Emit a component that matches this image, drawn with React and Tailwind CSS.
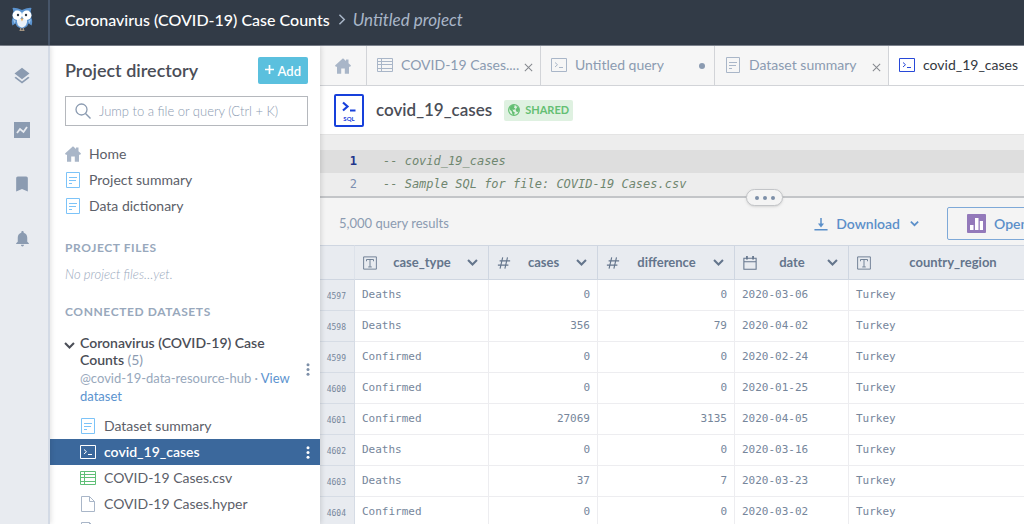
import { MdBookmark, MdLayers, MdNotifications } from 'react-icons/md';

const COLUMNS = [
  { key: 'case_type', icon: TextTypeIcon, width: 'w-[134px]' },
  { key: 'cases', icon: NumberTypeIcon, width: 'w-[109px]', numeric: true },
  { key: 'difference', icon: NumberTypeIcon, width: 'w-[137px]', numeric: true },
  { key: 'date', icon: DateTypeIcon, width: 'w-[114px]' },
  { key: 'country_region', icon: TextTypeIcon, width: '' },
];

const ROWS = [
  [4597, 'Deaths', 0, 0, '2020-03-06', 'Turkey'],
  [4598, 'Deaths', 356, 79, '2020-04-02', 'Turkey'],
  [4599, 'Confirmed', 0, 0, '2020-02-24', 'Turkey'],
  [4600, 'Confirmed', 0, 0, '2020-01-25', 'Turkey'],
  [4601, 'Confirmed', 27069, 3135, '2020-04-05', 'Turkey'],
  [4602, 'Deaths', 0, 0, '2020-03-16', 'Turkey'],
  [4603, 'Deaths', 37, 7, '2020-03-23', 'Turkey'],
  [4604, 'Confirmed', 0, 0, '2020-03-02', 'Turkey'],
];

function Svg({ size = 16, className = '', children }) {
  return (
    <svg width={size} height={size} viewBox="0 0 16 16" fill="none" stroke="currentColor" aria-hidden="true"
      className={`shrink-0 ${className}`}>
      {children}
    </svg>
  );
}

function HomeIcon({ className }) {
  return (
    <Svg className={className}>
      <path fill="currentColor" stroke="none" d="M8 .3 11 3V1.500h2.500V5.200L16 7.600 15.200 8.800H14V15.700H9.800V10.500H6.200V15.700H2V8.800H.8L0 7.600Z" />
    </Svg>
  );
}

function SummaryIcon({ className }) {
  return (
    <Svg className={className}>
      <path d="M1.500.5h13v15h-13zM4 5.500h8M4 8.500h7M4 11.500h3" />
    </Svg>
  );
}

function QueryIcon({ className }) {
  return (
    <Svg className={className}>
      <path d="M.5 1.500h15v13H.5zM4 5.500l2.500 2.200L4 10M8 10.500h4" />
    </Svg>
  );
}

function TableIcon({ className }) {
  return (
    <Svg className={className}>
      <path d="M.5 1.500h15v13H.5zM.5 4.500h15M.5 7.500h15M.5 11.500h15M4.500 1.500v13" />
    </Svg>
  );
}

function FileIcon({ className }) {
  return (
    <Svg className={className}>
      <path d="M1.500.5h8l5 5v10h-13zM9.500.5v5h5" />
    </Svg>
  );
}

function ChartIcon() {
  return (
    <Svg>
      <path fill="currentColor" stroke="none" d="M0 0h16v16H0z" />
      <path stroke="#e8ebf0" strokeWidth="1.800" d="M3 11 6 7l3.500 3L13 5" />
    </Svg>
  );
}

function TextTypeIcon() {
  return (
    <Svg size={14}>
      <path d="M.7 1h14.600v14H.7zM4 6V4h8v2M8 4v8.300M6 12.500h4" />
    </Svg>
  );
}

function NumberTypeIcon() {
  return (
    <Svg size={14}>
      <path strokeWidth="1.300" d="M6.500 1.500 3.500 14.500M12 1.500 9 14.500M3 5.500h12M1 10.500h12" />
    </Svg>
  );
}

function DateTypeIcon() {
  return (
    <Svg size={14}>
      <path strokeWidth="1.200" d="M1 2.500h14v12.700H1zM1 6.500h14" />
      <path strokeWidth="2" d="M4.500 0v4M11.500 0v4" />
    </Svg>
  );
}

function Chevron({ size = 11, className }) {
  return (
    <Svg size={size} className={className}>
      <path strokeWidth="3" d="M1.500 4.500 8 11l6.500-6.500" />
    </Svg>
  );
}

function CloseIcon() {
  return (
    <Svg size={9}>
      <path strokeWidth="1.800" d="M1.500 1.500l13 13M14.500 1.500l-13 13" />
    </Svg>
  );
}

function Kebab() {
  return (
    <svg width="4" height="13" viewBox="0 0 4 13" fill="currentColor" aria-hidden="true">
      <circle cx="2" cy="1.700" r="1.500" />
      <circle cx="2" cy="6.500" r="1.500" />
      <circle cx="2" cy="11.300" r="1.500" />
    </svg>
  );
}

function Owl() {
  return (
    <svg width="22" height="24" viewBox="0 0 22 24" aria-hidden="true">
      <path fill="#5b93cf" d="M1.500 1Q4 .2 11 3 18 .2 20.500 1L19.600 4.500Q21.200 7 20.300 11 22 14 20.600 18.500L17.500 16.500Q16 21 11 21.500 6 21 4.500 16.500L1.400 18.500Q0 14 1.700 11 .8 7 2.400 4.500Z" />
      <path fill="#9cc5ea" d="M4 3.500Q8 3 11 5.500 14 3 18 3.500L11 9ZM1.800 12 4.800 14 3.500 16.500ZM20.200 12 17.200 14 18.500 16.500Z" />
      <path fill="#e9f1f8" d="M6 12h10q1 7-5 8.800Q5 19 6 12Z" />
      <circle cx="6.300" cy="8.300" r="4.700" fill="#fff" />
      <circle cx="15.700" cy="8.300" r="4.700" fill="#fff" />
      <circle cx="7" cy="8" r="1.200" fill="#2f3a48" />
      <circle cx="15" cy="8" r="1.200" fill="#2f3a48" />
      <path fill="#eda64a" d="M9.700 11.500h2.600L11 14.500Z" />
      <path stroke="#b9a58c" fill="none" d="M9.700 21v2.500M12.300 21v2.500M8.500 23.300h5" />
    </svg>
  );
}

function Rail() {
  const items = [
    ['Layers', <MdLayers size={20} />],
    ['Insights', <ChartIcon />],
    ['Bookmarks', <MdBookmark size={20} />],
    ['Notifications', <MdNotifications size={19} />],
  ];
  return (
    <nav aria-label="Main" className="relative z-20 flex w-[50px] shrink-0 flex-col items-center gap-[34px] border-r-2 border-[#d3dae5] bg-[#e8ebf0] pt-5 pr-1 text-[#8b9bb1] shadow-[1px_0_5px_rgba(0,0,0,0.12)]">
      {items.map(([label, icon]) => (
        <button key={label} type="button" aria-label={label} className="flex h-5 items-center">{icon}</button>
      ))}
    </nav>
  );
}

function FileLink({ icon: Icon, iconClass, active, children }) {
  return (
    <li className={active ? 'flex h-[26px] items-center bg-[#3b689c] pr-[10px] pl-[30px] font-semibold text-white' : 'flex h-[26px] items-center pr-[10px] pl-[30px]'}>
      <a href="#" className="flex flex-1 items-center gap-2">
        <Icon className={iconClass} />
        {children}
      </a>
      {active && <button type="button" aria-label="File options"><Kebab /></button>}
    </li>
  );
}

function Sidebar() {
  return (
    <aside className="relative z-10 w-[270px] shrink-0 overflow-hidden bg-white text-sm text-[#5c6069] shadow-[1px_0_5px_rgba(0,0,0,0.14)]">
      <div className="pr-3 pl-[15px]">
        <div className="flex items-center justify-between pt-[11px]">
          <h2 className="pb-0.5 text-lg leading-6 font-semibold text-[#4b4e57]">Project directory</h2>
          <button type="button" className="flex h-[27px] items-center gap-1 rounded-xs bg-[#5bc0de] px-[7px] pt-0.5 text-[13px] font-semibold text-white">
            <Svg size={9} className="mb-1"><path strokeWidth="3" d="M8 0v16M0 8h16" /></Svg>
            Add
          </button>
        </div>
        <label className="mt-3 flex h-[30px] items-center gap-2 border border-[#b5b8bd] px-[9px]">
          <Svg className="text-[#8b9bb1]">
            <circle cx="6.500" cy="6.500" r="5.500" strokeWidth="1.300" />
            <path strokeWidth="1.400" d="M10.500 10.500l5 5" />
          </Svg>
          <input type="text" aria-label="Jump to a file or query" placeholder="Jump to a file or query (Ctrl + K)"
            className="min-w-0 flex-1 text-[13px] font-light outline-none placeholder:text-[#8b9bb1]" />
        </label>
        <ul className="mt-[15px]">
          <li><a href="#" className="flex h-[26px] items-center gap-2"><HomeIcon className="text-[#a9b6c8]" />Home</a></li>
          <li><a href="#" className="flex h-[26px] items-center gap-2"><SummaryIcon className="text-[#7cc3f8]" />Project summary</a></li>
          <li><a href="#" className="flex h-[26px] items-center gap-2"><SummaryIcon className="text-[#7cc3f8]" />Data dictionary</a></li>
        </ul>
        <h3 className="mt-[21px] text-xs leading-4 font-bold tracking-wider text-[#98a8bc]">PROJECT FILES</h3>
        <p className="mt-2 text-[13px] leading-5 font-light text-[#98a8bc] italic">No project files…yet.</p>
        <h3 className="mt-5 text-xs leading-4 font-bold tracking-wider text-[#98a8bc]">CONNECTED DATASETS</h3>
      </div>
      <div className="mt-[14px] flex items-center pr-[10px] pl-[14px]">
        <button type="button" aria-label="Collapse dataset" className="mt-[6px] w-4 self-start text-[#4b4e57]"><Chevron /></button>
        <div className="flex-1">
          <h4 className="text-sm leading-[17px] font-semibold text-[#4b4e57]">
            Coronavirus (COVID-19) Case<br />Counts <span className="font-normal text-[#8b9bb1]">(5)</span>
          </h4>
          <p className="mt-px text-[13px] leading-[18px] text-[#98a8bc]">
            @covid-19-data-resource-hub · <a href="#" className="text-[#5b93cf]">View<br />dataset</a>
          </p>
        </div>
        <button type="button" aria-label="Dataset options" className="text-[#7d8fa8]"><Kebab /></button>
      </div>
      <ul className="mt-2">
        <FileLink icon={SummaryIcon} iconClass="text-[#7cc3f8]">Dataset summary</FileLink>
        <FileLink icon={QueryIcon} active>covid_19_cases</FileLink>
        <FileLink icon={TableIcon} iconClass="text-[#5fbf77]">COVID-19 Cases.csv</FileLink>
        <FileLink icon={FileIcon} iconClass="text-[#a9b6c8]">COVID-19 Cases.hyper</FileLink>
        <FileLink icon={FileIcon} iconClass="text-[#a9b6c8]" />
      </ul>
    </aside>
  );
}

function Tab({ icon: Icon, title, end }) {
  return (
    <div className="flex w-[174px] shrink-0 items-center border-r border-[#d2d4d8] pr-[7px] pl-[10px]">
      <button type="button" className="flex min-w-0 flex-1 items-center gap-2 pb-0.5">
        <Icon className="text-[#a9b6c8]" />
        <span className="truncate">{title}</span>
      </button>
      {end}
    </div>
  );
}

function Tabs() {
  const close = <button type="button" aria-label="Close tab" className="pt-1 text-[#85888e]"><CloseIcon /></button>;
  return (
    <div className="flex h-10 shrink-0 border-b border-[#d2d4d8] bg-[#f6f6f6] text-sm text-[#8b9bb1]">
      <button type="button" aria-label="Home" className="flex w-[47px] shrink-0 items-center justify-center border-r border-[#d2d4d8]">
        <HomeIcon className="text-[#a9b6c8]" />
      </button>
      <Tab icon={TableIcon} title="COVID-19 Cases...." end={close} />
      <Tab icon={QueryIcon} title="Untitled query" end={<span className="mr-0.5 size-1.5 rounded-full bg-[#8b9bb1]" />} />
      <Tab icon={SummaryIcon} title="Dataset summary" end={close} />
      <button type="button" className="flex w-[174px] shrink-0 items-center gap-2 bg-white pb-0.5 pl-[10px] text-[#33373e]">
        <QueryIcon className="text-[#2849d8]" />
        covid_19_cases
      </button>
    </div>
  );
}

function QueryTitle() {
  return (
    <div className="flex h-[49px] shrink-0 items-center border-b border-[#e4e4e4] pl-[14px]">
      <span className="flex h-[33px] w-[30px] flex-col items-center rounded-xs border-2 border-[#1740db] pt-[5px] text-[#1740db]">
        <svg width="16" height="14" viewBox="0 0 16 14" fill="none" stroke="currentColor" strokeWidth="2.200" aria-hidden="true">
          <path d="M2 1.500 6.500 5.500 2 9.500M9 9.500h5.500" />
        </svg>
        <span className="text-[6px] leading-[8px] font-bold">SQL</span>
      </span>
      <h1 className="ml-3 text-[17px] font-semibold text-[#4b4e57]">covid_19_cases</h1>
      <span className="ml-3 flex h-[21px] items-center gap-[5px] rounded-xs bg-[#dff1e1] px-1 text-[11px] font-bold text-[#64bf73]">
        <Svg size={12}>
          <circle cx="8" cy="8" r="7.200" strokeWidth="1.500" />
          <path fill="currentColor" stroke="none" d="M2 4 6 1l3 1-1 3 2 1-2 2-2-1 1 3 2 1-1 4-2-1-1-4-3-3ZM11 2l4 4-1 5-3-1-1-3 2-2Z" />
        </Svg>
        SHARED
      </span>
    </div>
  );
}

function Editor() {
  return (
    <div className="relative h-[63px] shrink-0 border-b-2 border-[#c3c5c8] bg-[#ededed] pt-[15px] font-['DejaVu_Sans_Mono',monospace] text-xs leading-[23px]">
      <div className="flex bg-[#dedede]">
        <span className="w-[37px] text-right font-bold text-[#21358c]">1</span>
        <code className="ml-[26px] font-['DejaVu_Sans_Mono',monospace] whitespace-pre text-[#6f866f] italic">-- covid_19_cases</code>
      </div>
      <div className="flex">
        <span className="w-[37px] text-right text-[#7d8fb0]">2</span>
        <code className="ml-[26px] font-['DejaVu_Sans_Mono',monospace] whitespace-pre text-[#6f866f] italic">-- Sample SQL for file: COVID-19 Cases.csv</code>
      </div>
      <button type="button" aria-label="Resize editor" className="absolute -bottom-[10px] left-[426px] z-10 flex h-[17px] w-[37px] items-center justify-center gap-1 rounded-full border border-[#c3c5c8] bg-[#f4f4f4] shadow-sm">
        <span className="size-1 rounded-full bg-[#7d8fa8]" />
        <span className="size-1 rounded-full bg-[#7d8fa8]" />
        <span className="size-1 rounded-full bg-[#7d8fa8]" />
      </button>
    </div>
  );
}

function ResultsBar() {
  return (
    <div className="flex h-[47px] min-w-[737px] items-center bg-[#f4f4f4] pt-1 pr-4 pl-[19px]">
      <p className="flex-1 text-[13px] text-[#8b9bb1]">5,000 query results</p>
      <button type="button" className="flex items-center gap-2 text-sm font-semibold text-[#5b8fc9]">
        <Svg size={14}>
          <path strokeWidth="1.700" d="M8 1v9M.5 14.500h15" />
          <path fill="currentColor" stroke="none" d="M4.500 7.500h7L8 12Z" />
        </Svg>
        Download
        <Chevron size={9} className="ml-0.5" />
      </button>
      <button type="button" className="ml-7 flex h-[33px] w-[94px] items-center gap-2 rounded-xs border border-[#7ea9d8] pl-[19px] text-sm font-semibold text-[#5b8fc9]">
        <svg width="19" height="19" viewBox="0 0 19 19" className="shrink-0" aria-hidden="true">
          <rect width="19" height="19" rx="1" fill="#9379ba" />
          <path fill="#fff" d="M3 11h3.500v5H3zM8 4h3.500v12H8zM12.800 7H16v9h-3.200z" />
        </svg>
        Open
      </button>
    </div>
  );
}

function ResultsTable() {
  return (
    <table className="w-full min-w-[737px] table-fixed border-separate border-spacing-0 text-[#76869b]">
      <thead>
        <tr className="h-[35px] bg-[#e8ebf0] text-[13px] text-[#64758c]">
          <th className="w-[35px] border-y border-r border-[#cfd6e1] border-r-[#dde2ea]" aria-label="Row" />
          {COLUMNS.map(({ key, icon: Icon, width }) => (
            <th key={key} scope="col" className={`${width} border-y border-r border-[#cfd6e1] pr-[10px] pl-2 font-bold`}>
              <div className="flex items-center justify-between">
                <Icon />
                {key}
                <button type="button" aria-label={`Sort ${key}`}><Chevron /></button>
              </div>
            </th>
          ))}
        </tr>
      </thead>
      <tbody className="font-['DejaVu_Sans_Mono',monospace] text-[11px]">
        {ROWS.map(([id, ...cells]) => (
          <tr key={id} className="h-[31px]">
            <th scope="row" className="border-r border-b border-[#d6dce5] bg-[#e8ebf0] pt-[3px] pr-2 text-right text-[8px] font-normal">{id}</th>
            {cells.map((cell, i) => (
              <td key={COLUMNS[i].key} className={COLUMNS[i].numeric ? 'border-r border-b border-[#ededf0] pr-[7px] text-right' : 'border-r border-b border-[#ededf0] pl-[7px]'}>
                {cell}
              </td>
            ))}
          </tr>
        ))}
      </tbody>
    </table>
  );
}

export default function App() {
  return (
    <div className="flex h-screen flex-col overflow-hidden bg-white font-[Lato,sans-serif]">
      <header className="flex h-[46px] shrink-0 items-stretch border-b border-[#7c828d] bg-[#323b47] text-white">
        <a href="#" aria-label="Home" className="flex w-[50px] items-center justify-center border-r-2 border-[#475569] pr-1 pb-2"><Owl /></a>
        <div className="flex items-center pb-1.5 pl-[15px]">
          <a href="#" className="text-base font-medium">Coronavirus (COVID-19) Case Counts</a>
          <Svg size={11} className="mx-1.5 text-[#a9b6c8]"><path strokeWidth="2.200" d="M5 1l7 7-7 7" /></Svg>
          <span className="text-[17px] text-[#a9b6c8] italic">Untitled project</span>
        </div>
      </header>
      <div className="flex min-h-0 flex-1">
        <Rail />
        <Sidebar />
        <main className="flex min-w-0 flex-1 flex-col overflow-hidden">
          <Tabs />
          <QueryTitle />
          <Editor />
          <div className="min-h-0 flex-1 overflow-hidden">
            <ResultsBar />
            <ResultsTable />
          </div>
        </main>
      </div>
    </div>
  );
}
